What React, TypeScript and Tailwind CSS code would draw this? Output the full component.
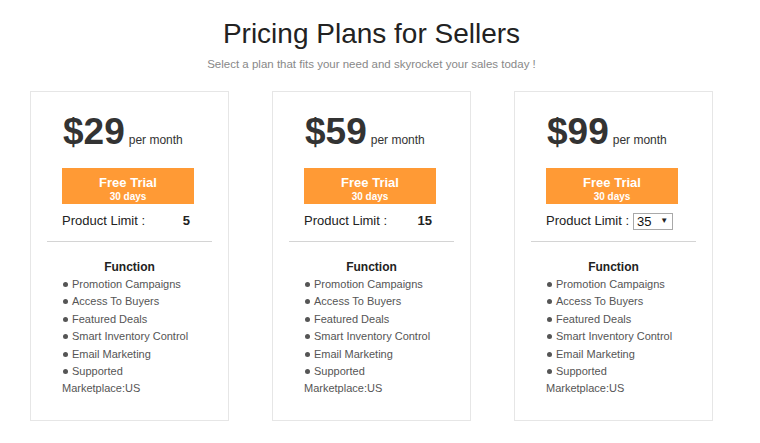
import React from "react";

const features = [
  "Promotion Campaigns",
  "Access To Buyers",
  "Featured Deals",
  "Smart Inventory Control",
  "Email Marketing",
  "Supported Marketplace:US",
];

function Card({ price, limit, select }: { price: string; limit: string; select?: boolean }) {
  return (
    <div className="w-[199px] h-[330px] border border-[#e6e6e6] bg-white">
      <div className="pl-[32px] pt-[22px]">
        <div className="flex items-baseline">
          <span className="text-[37px] leading-[36px] font-bold text-[#333]">{price}</span>
          <span className="ml-[4px] text-[12px] leading-[14px] text-[#333]">per month</span>
        </div>
        <div className="-ml-px mt-[18px] w-[132px] h-[36px] bg-[#ff9a35] text-white text-center font-bold">
          <div className="pt-[7px] text-[13px] leading-[16px]">Free Trial</div>
          <div className="text-[10px] leading-[12px]">30 days</div>
        </div>
        {select ? (
          <div className="-ml-px mt-[7px] flex items-center h-[20px] text-[13px] text-[#222]">
            <span>Product Limit :</span>
            <div className="ml-[4px] flex items-center justify-between w-[40px] h-[17px] border border-[#a9a9a9] bg-white pl-[3px] pr-[4px]">
              <span className="text-[13px] leading-[15px] text-[#111]">{limit}</span>
              <span className="text-[8px] leading-[10px] text-[#222]">▼</span>
            </div>
          </div>
        ) : (
          <div className="-ml-px mt-[7px] flex items-center justify-between w-[128px] h-[20px] text-[13px] text-[#222]">
            <span>Product Limit :</span>
            <span className="font-bold text-[#222]">{limit}</span>
          </div>
        )}
      </div>
      <div className="mt-[10px] mx-[16px] h-px bg-[#d4d4d4]" />
      <div className="mt-[17px] text-center text-[12px] leading-[16px] font-bold text-[#222]">Function</div>
      <ul className="mt-[1px] pl-[31px] w-[164px] text-[11px] leading-[17.4px] text-[#555]">
        {features.map((f) => (
          <li key={f}>
            <span className="inline-block w-[5px] h-[5px] rounded-full bg-[#555] mr-[4px] ml-[1px] align-[1px]" />
            {f}
          </li>
        ))}
      </ul>
    </div>
  );
}

export default function App() {
  return (
    <div className="w-[760px] h-[443px] bg-white font-['Liberation_Sans',Arial,sans-serif]">
      <div className="w-[743px] pt-[18px]">
        <h1 className="text-center text-[28px] leading-[32px] text-[#222]">Pricing Plans for Sellers</h1>
        <p className="mt-[6px] text-center text-[11.5px] leading-[16px] text-[#888]">
          Select a plan that fits your need and skyrocket your sales today !
        </p>
        <div className="mt-[19px] flex gap-[43px] pl-[30px]">
          <Card price="$29" limit="5" />
          <Card price="$59" limit="15" />
          <Card price="$99" limit="35" select />
        </div>
      </div>
    </div>
  );
}
